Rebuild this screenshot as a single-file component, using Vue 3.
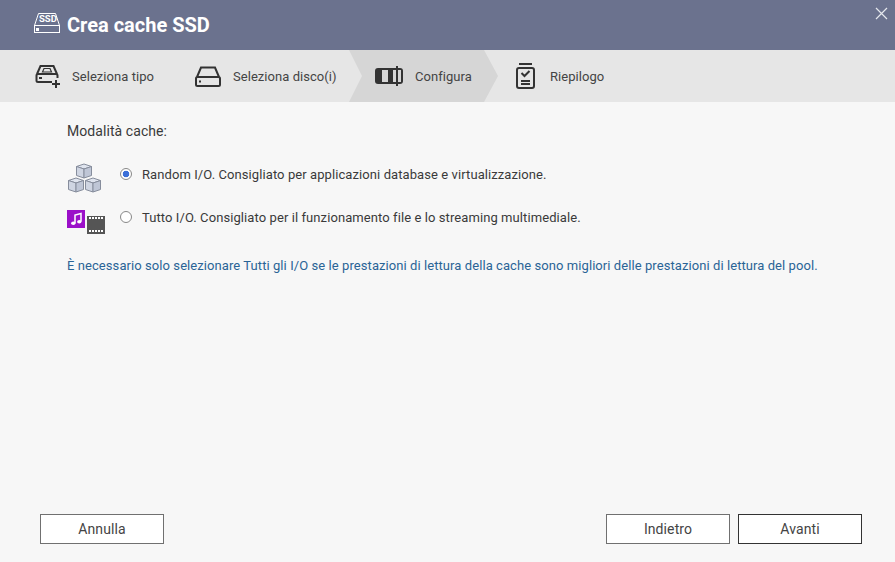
<script setup>
const steps = [
  { label: 'Seleziona tipo', cls: 's1', icon: 'type' },
  { label: 'Seleziona disco(i)', cls: 's2', icon: 'disk' },
  { label: 'Configura', cls: 's3 active', icon: 'conf' },
  { label: 'Riepilogo', cls: 's4', icon: 'sum' },
]
</script>

<template>
  <div class="dialog">
    <header class="head">
      <svg class="ssd" width="28" height="22" viewBox="0 0 28 22" fill="none" stroke="#fff" stroke-width="1">
        <path d="M1.5 13.5 L5.5 1.5 H22.5 L26.5 13.5" />
        <rect x="1.5" y="13.5" width="25" height="7" />
        <rect x="3" y="16" width="3" height="3" fill="#fff" stroke="none" />
      </svg>
      <span class="ssd-text">SSD</span>
      <h1>Crea cache SSD</h1>
      <svg class="close" width="13" height="13" viewBox="0 0 13 13" stroke="#e6e8ee" stroke-width="1.2">
        <path d="M1 1 L12 12 M12 1 L1 12" />
      </svg>
    </header>

    <nav class="steps">
      <div v-for="s in steps" :key="s.label" class="step" :class="s.cls">
        <svg v-if="s.icon === 'type'" width="26" height="24" viewBox="0 0 26 24" fill="none" stroke="#333" stroke-width="2">
          <path d="M2 10 L5.500 2 H18.500 L22 10" />
          <path d="M7.500 8 L9 4.500 H15 L16.500 8 Z" stroke-width="1.200" />
          <path d="M17 18 H3 Q1.500 18 1.500 16.500 V11.500 Q1.500 10 3 10 H21 Q22.500 10 22.500 11.500 V14" />
          <rect x="4" y="13" width="3" height="2" fill="#333" stroke="none" />
          <path d="M21 16 V24 M17 20 H25" />
        </svg>
        <svg v-else-if="s.icon === 'disk'" width="26" height="21" viewBox="0 0 26 21" fill="none" stroke="#333" stroke-width="2">
          <path d="M2 11 L6 1.500 H20 L24 11" />
          <rect x="1" y="11" width="24" height="9" rx="1.500" />
          <rect x="4" y="14.500" width="2" height="2" fill="#333" stroke="none" />
        </svg>
        <svg v-else-if="s.icon === 'conf'" width="28" height="20" viewBox="0 0 28 20">
          <path d="M3 2 H25 Q28 2 28 5 V15 Q28 18 25 18 H3 Q0 18 0 15 V5 Q0 2 3 2 Z" fill="#333" />
          <rect x="7" y="4" width="6" height="12" fill="#d6d6d6" />
          <rect x="18" y="4" width="3" height="12" fill="#d6d6d6" />
          <rect x="23" y="4" width="3" height="12" fill="#d6d6d6" />
          <rect x="21" y="0" width="2" height="20" fill="#333" />
        </svg>
        <svg v-else width="19" height="26" viewBox="0 0 19 26" fill="none" stroke="#333" stroke-width="2">
          <path d="M3 1 H16" />
          <rect x="1" y="5" width="17" height="20" rx="2" />
          <path d="M5.500 10 L8.500 13 L13.500 8" />
          <path d="M5 18 H14 M5 21 H14" />
        </svg>
        <span>{{ s.label }}</span>
      </div>
    </nav>

    <main class="body">
      <h2>Modalità cache:</h2>

      <div class="option first">
        <svg class="opt-icon" width="36" height="32" viewBox="0 0 36 32">
          <g v-for="(p, i) in [[9,1],[1,15],[18,15]]" :key="i" :transform="`translate(${p[0]} ${p[1]})`" stroke="#868d9c" stroke-width="1" stroke-linejoin="round">
            <path d="M0.500 3.500 L8 1 L15.500 3.500 L8 6 Z" fill="#dfe4ee" />
            <path d="M0.500 3.500 L8 6 V15 L0.500 12.500 Z" fill="#cfd5e2" />
            <path d="M15.500 3.500 L8 6 V15 L15.500 12.500 Z" fill="#bfc6d6" />
          </g>
        </svg>
        <span class="radio on"></span>
        <span class="opt-text">Random I/O. Consigliato per applicazioni database e virtualizzazione.</span>
      </div>

      <div class="option second">
        <svg class="opt-icon" width="38" height="24" viewBox="0 0 38 24">
          <rect x="0" y="0" width="18" height="18" fill="#9b0fc9" />
          <path d="M8 13 V5 L14 3.500 V11.500" fill="none" stroke="#fff" stroke-width="1.500" />
          <ellipse cx="6.300" cy="13.200" rx="2.200" ry="1.800" fill="#fff" />
          <ellipse cx="12.300" cy="11.800" rx="2.200" ry="1.800" fill="#fff" />
          <rect x="20" y="6" width="18" height="18" fill="#555" />
          <g fill="#fff">
            <rect v-for="n in 5" :key="'a' + n" :x="19 + n * 3" y="7" width="2" height="2" />
            <rect v-for="n in 5" :key="'b' + n" :x="19 + n * 3" y="20" width="2" height="2" />
          </g>
        </svg>
        <span class="radio"></span>
        <span class="opt-text">Tutto I/O. Consigliato per il funzionamento file e lo streaming multimediale.</span>
      </div>

      <p class="note">È necessario solo selezionare Tutti gli I/O se le prestazioni di lettura della cache sono migliori delle prestazioni di lettura del pool.</p>
    </main>

    <footer class="foot">
      <button class="btn">Annulla</button>
      <div class="right">
        <button class="btn">Indietro</button>
        <button class="btn primary">Avanti</button>
      </div>
    </footer>
  </div>
</template>

<style>
html, body { margin: 0; padding: 0; }
</style>

<style scoped>
.dialog {
  width: 895px;
  height: 562px;
  display: flex;
  flex-direction: column;
  background: #f7f7f7;
  font-family: Roboto, "Liberation Sans", sans-serif;
  color: #333;
  overflow: hidden;
}
.head {
  height: 50px;
  flex: none;
  background: #6b728e;
  display: flex;
  align-items: center;
  padding-left: 33px;
  position: relative;
  box-sizing: border-box;
}
.ssd { margin-top: -4px; margin-right: 6px; flex: none; }
.ssd-text {
  position: absolute;
  left: 39px;
  top: 14px;
  font-size: 9.5px;
  font-weight: 700;
  line-height: 10px;
  color: #fff;
}
h1 {
  margin: 0;
  font-size: 20px;
  font-weight: 700;
  color: #fff;
}
.close { position: absolute; right: 7px; top: 7px; }
.steps {
  height: 52px;
  flex: none;
  background: #e6e6e6;
  display: flex;
}
.step {
  display: flex;
  align-items: center;
  font-size: 13px;
  letter-spacing: 0.05px;
  color: #444;
  box-sizing: border-box;
  height: 52px;
}
.step span { white-space: nowrap; }
.s1 { width: 194px; padding-left: 35px; gap: 11px; }
.s2 { width: 155px; padding-left: 1px; gap: 12px; }
.s3 {
  width: 149px;
  padding-left: 26px;
  gap: 12px;
  background: #d6d6d6;
  clip-path: polygon(0 0, 135px 0, 149px 50%, 135px 100%, 0 100%, 13px 50%);
}
.s4 { padding-left: 18px; gap: 15px; }
.body { flex: 1; padding: 0 67px; }
h2 {
  margin: 21px 0 0;
  font-size: 14px;
  line-height: 17px;
  font-weight: 400;
  letter-spacing: 0.07px;
  color: #3a3a3a;
}
.option {
  display: flex;
  align-items: center;
  font-size: 13px;
  letter-spacing: 0.085px;
  color: #3a3a3a;
}
.first { margin-top: 18px; height: 32px; }
.second { margin-top: 15px; height: 24px; }
.opt-icon { flex: none; }
.first .opt-icon { margin: 8px 17px 0 0; }
.second .opt-icon { margin: 10px 15px 0 0; }
.radio {
  width: 12px;
  height: 12px;
  box-sizing: border-box;
  border: 1px solid #888;
  border-radius: 50%;
  background: #fff;
  flex: none;
  margin-right: 10px;
}
.radio.on { background: radial-gradient(circle, #3b6fd8 0 3px, #fff 3.6px); }
.note {
  margin: 29px 0 0;
  font-size: 13px;
  line-height: 16px;
  letter-spacing: 0.075px;
  color: #2a6496;
  white-space: nowrap;
}
.foot {
  flex: none;
  display: flex;
  justify-content: space-between;
  padding: 0 33px 18px 40px;
}
.right { display: flex; gap: 8px; }
.btn {
  width: 124px;
  height: 30px;
  box-sizing: border-box;
  border: 1px solid #707070;
  background: #fff;
  font-family: inherit;
  font-size: 14px;
  letter-spacing: 0.1px;
  color: #444;
  padding: 0;
}
.primary { border-color: #333; }
</style>
